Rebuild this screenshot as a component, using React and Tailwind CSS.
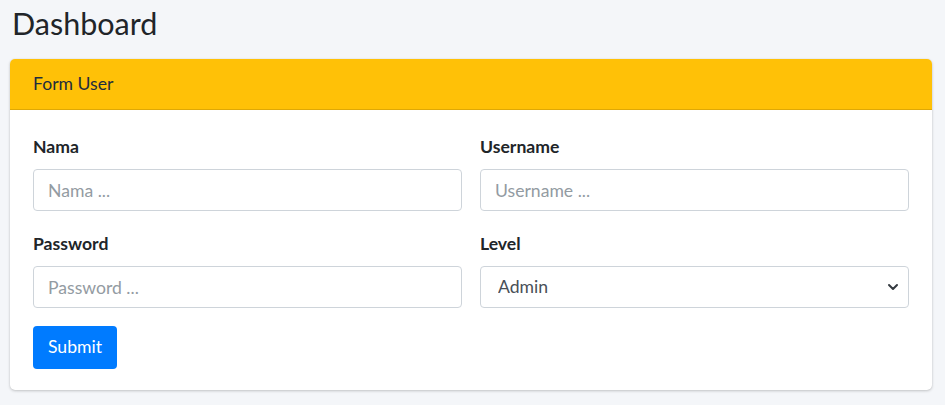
import { ChevronDown } from "lucide-react";

const font = { fontFamily: "Lato, 'Noto Sans', sans-serif" };

function Field({ label, placeholder, type = "text" }) {
  return (
    <div className="flex flex-col">
      <label className="mb-[9px] text-[17.6px] font-bold leading-[26px] text-[#212529]">{label}</label>
      <input
        type={type}
        placeholder={placeholder}
        className="h-[42px] w-full rounded-[4px] border border-[#ced4da] bg-white px-[14px] text-[17.6px] text-[#495057] outline-none placeholder:text-[#939ba2]"
      />
    </div>
  );
}

export default function App() {
  return (
    <div className="min-h-[405px] bg-[#f4f6f9] px-[10px] pt-[4px]" style={font}>
      <h1 className="pl-[2px] text-[30.5px] leading-[38px] text-[#212529]">Dashboard</h1>
      <div className="mt-[17px] w-[922px] overflow-hidden rounded-[5px] bg-white shadow-[0_0_1px_rgba(0,0,0,0.125),0_1px_3px_rgba(0,0,0,0.2)]">
        <div className="flex h-[51px] items-center border-b border-[#dea806] bg-[#ffc107] px-[23px] text-[17.6px] text-[#1f2d3d]">
          Form User
        </div>
        <div className="px-[23px] pt-[24px] pb-[21px]">
          <div className="grid grid-cols-2 gap-x-[18px] gap-y-[20px]">
            <Field label="Nama" placeholder="Nama ..." />
            <Field label="Username" placeholder="Username ..." />
            <Field label="Password" placeholder="Password ..." type="password" />
            <div className="flex flex-col">
              <label className="mb-[9px] text-[17.6px] font-bold leading-[26px] text-[#212529]">Level</label>
              <div className="relative">
                <select className="h-[42px] w-full appearance-none rounded-[4px] border border-[#ced4da] bg-white pl-[17px] text-[17.6px] text-[#495057] outline-none">
                  <option>Admin</option>
                  <option>User</option>
                </select>
                <ChevronDown
                  size={16}
                  strokeWidth={3}
                  className="pointer-events-none absolute right-[8px] top-[13px] text-[#343a40]"
                />
              </div>
            </div>
          </div>
          <button className="mt-[18px] h-[43px] rounded-[4px] bg-[#007bff] px-[15px] text-[17.6px] text-white">
            Submit
          </button>
        </div>
      </div>
    </div>
  );
}
